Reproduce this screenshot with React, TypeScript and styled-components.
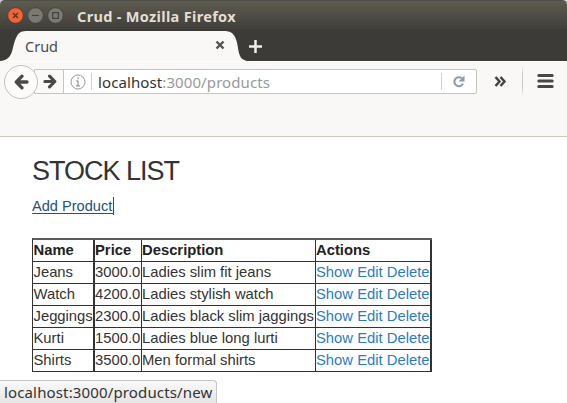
import React from "react";
import styled, { createGlobalStyle } from "styled-components";

const Global = createGlobalStyle`
  * { box-sizing: border-box; }
  html, body { margin: 0; background: #fff; overflow: hidden; }
`;

const ui = `"Noto Sans", "Open Sans", sans-serif`;
const page = `"Liberation Sans", Arial, sans-serif`;

const Window = styled.div`
  position: relative;
  width: 567px;
  height: 403px;
  overflow: hidden;
  display: flex;
  flex-direction: column;
  background: #fff;
  font-family: ${ui};
`;
const Corners = styled.div`
  background: #c9c8cc;
  flex: none;
`;
const TitleBar = styled.header`
  height: 29px;
  display: flex;
  align-items: center;
  padding: 1px 0 0 7px;
  border-top: 1px solid #504f49;
  border-radius: 5px 5px 0 0;
  background: linear-gradient(#5e5b50, #403f3a);
`;
const Controls = styled.div`
  display: flex;
  gap: 3px;
  margin-right: 13px;
  svg { display: block; }
`;
const Title = styled.h1`
  margin: 0;
  font-size: 14.5px;
  line-height: 20px;
  font-weight: 700;
  letter-spacing: 0.33px;
  color: #e3dfd2;
  white-space: nowrap;
`;
const TabStrip = styled.div`
  height: 32px;
  display: flex;
  background: #3c3b37;
`;
const Tab = styled.div`
  position: relative;
  width: 247px;
  height: 32px;
  display: flex;
  align-items: center;
  padding: 0 22px 0 25px;
  justify-content: space-between;
`;
const TabShape = styled.svg`
  position: absolute;
  left: 0;
  top: 0;
`;
const TabLabel = styled.span`
  position: relative;
  top: 1px;
  font-size: 14.5px;
  line-height: 20px;
  color: #4b4b4b;
`;
const TabClose = styled.svg`
  position: relative;
`;
const NewTab = styled.svg`
  margin: 10px 0 0 1px;
`;
const Toolbar = styled.nav`
  height: 76px;
  flex: none;
  display: flex;
  align-items: flex-start;
  padding: 3px 0 0 4px;
  background: #f9f8f7;
  border-top: 1px solid #fdfdfd;
  border-bottom: 1px solid #cbc9bf;
`;
const BackButton = styled.div`
  position: relative;
  z-index: 1;
  width: 34px;
  height: 34px;
  border-radius: 50%;
  border: 1px solid #c6c0bc;
  background: #fcfbfa;
  display: grid;
  place-items: center;
`;
const UrlBar = styled.div`
  width: 443px;
  height: 25px;
  margin: 4px 0 0 -4px;
  display: flex;
  align-items: center;
  border: 1px solid #c6c4bd;
  border-radius: 0 2px 2px 0;
  background: #fff;
`;
const Forward = styled.div`
  width: 29px;
  height: 23px;
  padding-left: 8px;
  display: flex;
  align-items: center;
  background: #faf9f8;
  border-right: 1px solid #c9c4c0;
`;
const Info = styled.svg`
  margin-left: 6px;
`;
const Rule = styled.span<{ $gap: number }>`
  width: 1px;
  height: 17px;
  margin-left: ${(p) => p.$gap}px;
  background: #d3d1ce;
`;
const Address = styled.span`
  flex: 1;
  padding-left: 6px;
  font-size: 15px;
  line-height: 22px;
  letter-spacing: 0.1px;
  color: #999;
  white-space: nowrap;
  b { font-weight: 400; color: #333; }
`;
const Reload = styled.svg`
  margin: 0 11px 0 11px;
`;
const Chevrons = styled.svg`
  margin: 11px 0 0 17px;
`;
const MenuDivider = styled.span`
  width: 1px;
  height: 32px;
  margin-left: 15px;
  background: linear-gradient(transparent, #c9c8c3 30%, #c9c8c3 70%, transparent);
`;
const MenuIcon = styled.svg`
  margin: 8px 0 0 14px;
`;
const Content = styled.main`
  padding: 18px 0 0 32px;
  font-family: ${page};
  color: #333;
`;
const Heading = styled.h2`
  margin: 0;
  font-weight: 400;
  font-size: 27px;
  line-height: 32px;
  letter-spacing: -1px;
  white-space: nowrap;
`;
const AddLink = styled.a`
  display: block;
  width: 82px;
  height: 18px;
  margin-top: 10px;
  border-right: 1px solid #23527c;
  color: #23527c;
  font-size: 14.6px;
  line-height: 18px;
  white-space: nowrap;
  text-decoration: none;
  background: linear-gradient(#23527c, #23527c) 0 16px / 100% 1px no-repeat;
`;
const Table = styled.div`
  width: 400px;
  margin-top: 23px;
  border-top: 2px solid #5b5b5b;
  border-left: 1px solid #333;
`;
const Row = styled.div<{ $head?: boolean }>`
  height: 22px;
  display: grid;
  grid-template-columns: 62px 47px 174px 116px;
  border-bottom: 1px solid #333;
  font-weight: ${(p) => (p.$head ? 700 : 400)};
  color: ${(p) => (p.$head ? "#222" : "#333")};
`;
const Cell = styled.div<{ $edge?: number; $inset?: number }>`
  padding-left: ${(p) => p.$inset ?? 0}px;
  border-right: ${(p) => p.$edge ?? 1}px solid #333;
  font-size: 14.8px;
  line-height: 21px;
  white-space: nowrap;
`;
const Action = styled.a`
  color: #2a7cc4;
`;
const Status = styled.footer`
  position: absolute;
  left: 0;
  bottom: 0;
  width: 217px;
  height: 23px;
  padding-left: 4px;
  border: 1px solid #c4c4c4;
  border-width: 1px 1px 0 0;
  border-radius: 0 4px 0 0;
  background: linear-gradient(#fafafa, #e4e4e4);
  font-size: 15px;
  line-height: 22px;
  letter-spacing: 0.14px;
  color: #333;
  white-space: nowrap;
`;

const products = [
  ["Jeans", "3000.0", "Ladies slim fit jeans"],
  ["Watch", "4200.0", "Ladies stylish watch"],
  ["Jeggings", "2300.0", "Ladies black slim jaggings"],
  ["Kurti", "1500.0", "Ladies blue long lurti"],
  ["Shirts", "3500.0", "Men formal shirts"],
];

const Arrow = ({ flip = false }: { flip?: boolean }) => (
  <svg width={flip ? 14 : 15} height={flip ? 15 : 16} viewBox="0 0 15 16" fill="none" stroke="#494949" strokeWidth="3.3" strokeLinecap="round" strokeLinejoin="round">
    <g transform={flip ? "translate(15 0) scale(-1 1)" : undefined}>
      <path d="M8 2.2 2.3 8 8 13.8M3 8h10" />
    </g>
  </svg>
);

export default function App() {
  return (
    <Window>
      <Global />
      <Corners>
        <TitleBar>
          <Controls>
            <svg width="17" height="17" viewBox="0 0 17 17">
              <circle cx="8.5" cy="8.5" r="7.8" fill="#ee6538" stroke="#48352c" strokeWidth=".7" />
              <path d="m6 6 5 5m0-5-5 5" stroke="#653021" strokeWidth="1.5" />
            </svg>
            <svg width="17" height="17" viewBox="0 0 17 17">
              <circle cx="8.5" cy="8.5" r="7.8" fill="#7b7a72" stroke="#3b3a36" strokeWidth=".7" />
              <path d="M5 8.5h7" stroke="#42413c" strokeWidth="1.2" />
            </svg>
            <svg width="17" height="17" viewBox="0 0 17 17">
              <circle cx="8.5" cy="8.5" r="7.8" fill="#7b7a72" stroke="#3b3a36" strokeWidth=".7" />
              <path d="M5.7 5.7h5.6v5.6H5.7z" fill="none" stroke="#42413c" strokeWidth="1.2" />
            </svg>
          </Controls>
          <Title>Crud - Mozilla Firefox</Title>
        </TitleBar>
      </Corners>
      <TabStrip>
        <Tab>
          <TabShape width="248" height="32" viewBox="0 0 248 32">
            <path d="M0 32C15 31 11 17 17 7c2-4 5-5 11-5h196c6 0 9 2 11 6 5 10 1 23 13 24z" fill="#f9f8f7" />
          </TabShape>
          <TabLabel>Crud</TabLabel>
          <TabClose width="10" height="10" viewBox="0 0 10 10">
            <path d="m1.5 1.5 7 7m0-7-7 7" stroke="#535353" strokeWidth="2.4" />
          </TabClose>
        </Tab>
        <NewTab width="15" height="15" viewBox="0 0 15 15">
          <path d="M7.5 1v13M1 7.5h13" stroke="#eeeeec" strokeWidth="2.5" />
        </NewTab>
      </TabStrip>
      <Toolbar>
        <BackButton><Arrow /></BackButton>
        <UrlBar>
          <Forward><Arrow flip /></Forward>
          <Info width="16" height="16" viewBox="0 0 16 16" fill="none" stroke="#999">
            <circle cx="8" cy="8" r="7" />
            <path d="M8 3.3v2M8 6.8v4.7M6.3 7H8M6 11.8h4" strokeWidth="1.3" />
          </Info>
          <Rule $gap={5} />
          <Address><b>localhost</b>:3000/products</Address>
          <Rule $gap={0} />
          <Reload width="12" height="13" viewBox="0 0 12 13">
            <path d="M8.8 3.3A4.5 4.5 0 1 0 10 8.6" fill="none" stroke="#8b9ba8" strokeWidth="2" />
            <path d="M11.5.5v6h-6z" fill="#8b9ba8" />
          </Reload>
        </UrlBar>
        <Chevrons width="13" height="11" viewBox="0 0 13 11" fill="none" stroke="#444" strokeWidth="2.5">
          <path d="m1.5 1 4 4.5-4 4.5m5-9 4 4.5-4 4.5" />
        </Chevrons>
        <MenuDivider />
        <MenuIcon width="17" height="16" viewBox="0 0 17 16" stroke="#474747" strokeWidth="3" strokeLinecap="round">
          <path d="M1.8 2.5h13.4M1.8 8h13.4M1.8 13.5h13.4" />
        </MenuIcon>
      </Toolbar>
      <Content>
        <Heading>STOCK LIST</Heading>
        <AddLink>Add Product</AddLink>
        <Table>
          <Row $head>
            <Cell $edge={2} $inset={0.5}>Name</Cell>
            <Cell>Price</Cell>
            <Cell>Description</Cell>
            <Cell $edge={2}>Actions</Cell>
          </Row>
          {products.map(([name, price, description]) => (
            <Row key={name}>
              <Cell $edge={2} $inset={0.5}>{name}</Cell>
              <Cell>{price}</Cell>
              <Cell>{description}</Cell>
              <Cell $edge={2}>
                <Action>Show</Action> <Action>Edit</Action> <Action>Delete</Action>
              </Cell>
            </Row>
          ))}
        </Table>
      </Content>
      <Status>localhost:3000/products/new</Status>
    </Window>
  );
}
